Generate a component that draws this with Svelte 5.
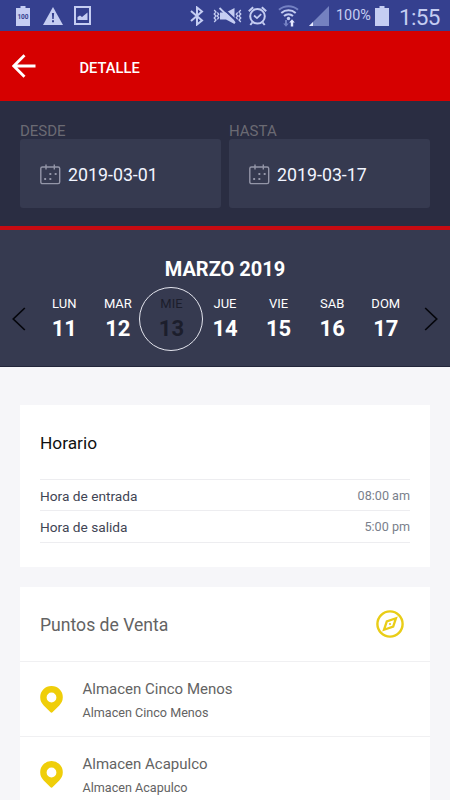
<script lang="ts">
  type Day = { name: string; date: number };
  type Store = { name: string; address: string };

  const filters = [
    { label: 'DESDE', value: '2019-03-01' },
    { label: 'HASTA', value: '2019-03-17' },
  ];

  const days: Day[] = [
    { name: 'LUN', date: 11 },
    { name: 'MAR', date: 12 },
    { name: 'MIE', date: 13 },
    { name: 'JUE', date: 14 },
    { name: 'VIE', date: 15 },
    { name: 'SAB', date: 16 },
    { name: 'DOM', date: 17 },
  ];

  const schedule = [
    { label: 'Hora de entrada', time: '08:00 am' },
    { label: 'Hora de salida', time: '5:00 pm' },
  ];

  const stores: Store[] = [
    { name: 'Almacen Cinco Menos', address: 'Almacen Cinco Menos' },
    { name: 'Almacen Acapulco', address: 'Almacen Acapulco' },
  ];

  let selected = $state(13);
</script>

<div class="screen">
  <div class="status">
    <div class="group left">
      <svg width="14" height="20" viewBox="0 0 14 20">
        <path d="M4.5 0h5v2H14v18H0V2h4.5z" fill="#c5cdf2" />
        <text x="7" y="13.2" text-anchor="middle" class="tiny">100</text>
      </svg>
      <svg class="warn" width="20" height="18" viewBox="0 0 20 18">
        <path d="M10 0l10 18H0z" fill="#c5cdf2" />
        <path d="M8.9 6h2.2l-.4 6H9.3zM9 13.3h2v2H9z" fill="#35408f" />
      </svg>
      <svg class="photo" width="17" height="19" viewBox="0 0 17 19">
        <rect x="1" y="1" width="15" height="17" fill="none" stroke="#c5cdf2" stroke-width="2" />
        <path d="M3.5 14V11l2.5-1.5 2 1.5 5.5-4.5V14z" fill="#c5cdf2" />
      </svg>
    </div>
    <div class="group right">
      <svg width="14" height="20" viewBox="0 0 14 20">
        <path d="M1 5l11 9.5L7 18.5v-17l5 4L1 15" fill="none" stroke="#c5cdf2" stroke-width="2" />
      </svg>
      <svg class="mute" width="29" height="18" viewBox="0 0 29 18">
        <path
          d="M1.2 3l1.8 2-1.8 2L3 9l-1.8 2L3 13l-1.8 2M4.3 5.5l1.4 1.7-1.4 1.7 1.4 1.8-1.4 1.7M27.8 3L26 5l1.8 2L26 9l1.8 2-1.8 2 1.8 2M24.7 5.5l-1.4 1.7 1.4 1.7-1.4 1.8 1.4 1.7"
          fill="none" stroke="#c5cdf2" stroke-width="1.3" />
        <path d="M7 5.5h6L21.5 1v16L13 12.5H7z" fill="#c5cdf2" />
        <path d="M7.5-1L24 14.5" stroke="#35408f" stroke-width="2" />
        <path d="M6.5 1L22 16" stroke="#c5cdf2" stroke-width="1.8" />
      </svg>
      <svg class="alarm" width="19" height="20" viewBox="0 0 19 20">
        <circle cx="9.5" cy="10.3" r="7.3" fill="none" stroke="#c5cdf2" stroke-width="2" />
        <path d="M.8 5.2l4.4-4M18.2 5.2l-4.4-4M4.3 16.5l-2 2.5M14.7 16.5l2 2.5" stroke="#c5cdf2" stroke-width="2" />
        <path d="M6 9.5l3 2.7 4.2-4" fill="none" stroke="#c5cdf2" stroke-width="1.7" />
      </svg>
      <svg class="wifi" width="21" height="22" viewBox="0 0 21 22">
        <path d="M1 4.8a14.5 14.5 0 0 1 19 0" fill="none" stroke="#7481c4" stroke-width="2" />
        <path d="M3.3 8a11 11 0 0 1 14.4 0M6 11a7 7 0 0 1 9 0" fill="none" stroke="#c5cdf2" stroke-width="2" />
        <circle cx="10.5" cy="13.5" r="1.7" fill="#c5cdf2" />
        <path d="M7 15h2v3.5h1.8L8 21.8l-2.8-3.3H7z" fill="#7481c4" />
        <path d="M12.8 21.5v-4h-1.6l2.8-3.3 2.8 3.3h-1.6v4z" fill="#e5e9ff" />
      </svg>
      <svg class="signal" width="20" height="20" viewBox="0 0 20 20">
        <path d="M20 0v20H0z" fill="#7481c0" />
        <path d="M4 16v4H0z" fill="#e5e9ff" />
      </svg>
      <span class="percent">100%</span>
      <svg class="battery" width="14" height="20" viewBox="0 0 14 20">
        <path d="M4.5 0h5v2H14v18H0V2h4.5z" fill="#c5cdf2" />
      </svg>
      <span class="clock">1:55</span>
    </div>
  </div>

  <header>
    <svg width="24" height="24" viewBox="0 0 24 24">
      <path d="M23.5 12H2M12.5 1.2L1.8 12l10.7 10.8" fill="none" stroke="#fff" stroke-width="2.8" />
    </svg>
    <h1>DETALLE</h1>
  </header>

  <section class="filters">
    {#each filters as filter}
      <div class="filter">
        <label for={filter.label}>{filter.label}</label>
        <button id={filter.label} class="date">
          <svg width="21" height="21" viewBox="0 0 21 21">
            <rect x=".8" y="3" width="18.9" height="16.6" rx="1.6" fill="none" stroke="#9496a8" stroke-width="1.4" />
            <path d="M6 .5v5M14.3 .5v5" stroke="#9496a8" stroke-width="1.4" />
            <path
              d="M9.4 9h1.9v1.9H9.4zM14.7 9h1.9v1.9h-1.9zM4.2 14h1.9v1.9H4.2zM9.4 14h1.9v1.9H9.4z"
              fill="#9496a8" />
          </svg>
          <span>{filter.value}</span>
        </button>
      </div>
    {/each}
  </section>

  <section class="calendar">
    <h2>MARZO 2019</h2>
    <div class="week">
      <button class="arrow" aria-label="Anterior">
        <svg width="14" height="24" viewBox="0 0 14 24">
          <path d="M12.8 1L1.3 12l11.5 11" fill="none" stroke="#05060c" stroke-width="1.7" />
        </svg>
      </button>
      {#each days as day}
        <button class="day" class:selected={selected === day.date} onclick={() => (selected = day.date)}>
          <span class="day-name">{day.name}</span>
          <span class="day-date">{day.date}</span>
        </button>
      {/each}
      <button class="arrow" aria-label="Siguiente">
        <svg width="14" height="24" viewBox="0 0 14 24">
          <path d="M1.2 1l11.5 11L1.2 23" fill="none" stroke="#05060c" stroke-width="1.7" />
        </svg>
      </button>
    </div>
  </section>

  <main>
    <div class="card schedule">
      <h3>Horario</h3>
      {#each schedule as row}
        <div class="hour">
          <span>{row.label}</span>
          <span class="time">{row.time}</span>
        </div>
      {/each}
    </div>

    <div class="card stores">
      <div class="stores-head">
        <h3>Puntos de Venta</h3>
        <svg width="28" height="28" viewBox="0 0 28 28">
          <circle cx="14" cy="14" r="12.6" fill="none" stroke="#e9cd17" stroke-width="2.4" />
          <path d="M20 8.2l-2.8 8.5L8 19.8l2.8-8.5z" fill="none" stroke="#e9cd17" stroke-width="2.3" />
          <circle cx="14" cy="14" r="1.1" fill="#e9cd17" />
        </svg>
      </div>
      {#each stores as store}
        <div class="store">
          <svg width="23" height="27" viewBox="0 0 23 27">
            <path
              d="M11.5 0A11.2 11.2 0 0 0 .2 11.3c0 4 1.7 6.2 3.5 8.1l6.6 6.7a1.7 1.7 0 0 0 2.4 0l6.6-6.7c1.8-1.9 3.5-4.1 3.5-8.1A11.2 11.2 0 0 0 11.5 0zm0 6.6a4.9 4.9 0 1 1 0 9.8 4.9 4.9 0 0 1 0-9.8z"
              fill="#efce0a" />
          </svg>
          <div class="store-info">
            <div class="store-name">{store.name}</div>
            <div class="store-address">{store.address}</div>
          </div>
        </div>
      {/each}
    </div>
  </main>
</div>

<style>
  .screen {
    display: flex;
    flex-direction: column;
    width: 450px;
    height: 800px;
    overflow: hidden;
    background: #f6f6f9;
    font-family: Roboto, sans-serif;
  }
  svg {
    display: block;
    flex: none;
  }
  h1,
  h2,
  h3 {
    margin: 0;
  }
  button {
    border: 0;
    padding: 0;
    background: none;
    color: inherit;
    font: inherit;
  }
  .status {
    display: flex;
    flex: none;
    justify-content: space-between;
    height: 31px;
    padding: 0 10px 0 16px;
    box-sizing: border-box;
    background: #35408f;
    color: #c5cdf2;
  }
  .group {
    display: flex;
    align-items: center;
  }
  .tiny {
    fill: #35408f;
    font-size: 6.5px;
    font-weight: 700;
  }
  .warn {
    margin-left: 13px;
  }
  .photo {
    margin-left: 11px;
  }
  .mute {
    margin-left: 9px;
  }
  .alarm {
    margin-left: 6px;
  }
  .wifi {
    margin-left: 11px;
  }
  .signal {
    margin-left: 10px;
  }
  .percent {
    width: 39px;
    margin-left: 7px;
    font-size: 14.4px;
    line-height: 20px;
    padding-top: 1px;
  }
  .clock {
    width: 41px;
    margin-left: 10px;
    font-size: 22.5px;
    letter-spacing: -0.7px;
    line-height: 24px;
    padding-top: 2px;
  }
  header {
    display: flex;
    flex: none;
    align-items: center;
    gap: 43.5px;
    height: 70px;
    padding-left: 12px;
    background: #d60000;
    color: #fff;
  }
  h1 {
    font-size: 14.7px;
    font-weight: 500;
    padding-top: 3px;
  }
  .filters {
    display: flex;
    flex: none;
    gap: 8px;
    height: 129px;
    box-sizing: border-box;
    padding: 20px 20px 0;
    background: #2a2d42;
    border-bottom: 4px solid #c70b12;
  }
  .filter {
    flex: 1;
  }
  label {
    display: block;
    height: 18px;
    font-size: 15px;
    line-height: 20px;
    color: #6b6a73;
  }
  .date {
    display: flex;
    align-items: center;
    gap: 7px;
    width: 100%;
    height: 69px;
    padding: 1px 0 0 20px;
    border-radius: 3px;
    background: #363a50;
    color: #f2f5ff;
    font-size: 17.8px;
  }
  .calendar {
    flex: none;
    height: 137px;
    box-sizing: border-box;
    padding-top: 27px;
    background: #363a50;
    border-bottom: 1px solid #23263a;
    color: #fff;
  }
  h2 {
    font-size: 20px;
    font-weight: 700;
    line-height: 25px;
    text-align: center;
  }
  .week {
    display: flex;
    align-items: center;
    height: 64px;
    margin-top: 4.5px;
  }
  .arrow {
    display: flex;
    justify-content: center;
    width: 37.5px;
  }
  .day {
    position: relative;
    display: flex;
    flex: 1;
    flex-direction: column;
    align-items: center;
  }
  .day-name {
    font-size: 13px;
    line-height: 18px;
  }
  .day-date {
    margin-top: 2px;
    font-size: 22px;
    font-weight: 700;
    line-height: 28px;
  }
  .selected {
    color: #1c1e2c;
  }
  .selected::before {
    content: '';
    position: absolute;
    left: 50%;
    top: 50%;
    width: 62px;
    height: 62px;
    border: 1px solid #e4e5ee;
    border-radius: 50%;
    transform: translate(-50%, -50%);
  }
  main {
    display: flex;
    flex-direction: column;
    gap: 20px;
    padding: 38px 20px 0;
  }
  .card {
    background: #fff;
  }
  .schedule {
    height: 162px;
    box-sizing: border-box;
    padding: 0 20px;
  }
  h3 {
    font-size: 17.3px;
    font-weight: 400;
    color: #111;
  }
  .schedule h3 {
    height: 74px;
    line-height: 76px;
    border-bottom: 1px solid #ededf0;
  }
  .hour {
    display: flex;
    justify-content: space-between;
    height: 30.3px;
    border-bottom: 1px solid #ededf0;
    font-size: 13.7px;
    line-height: 32px;
    color: #3f4554;
  }
  .time {
    font-size: 12.6px;
    color: #7a7f8c;
  }
  .stores-head {
    display: flex;
    align-items: center;
    justify-content: space-between;
    height: 74px;
    padding: 0 26px 0 20px;
    border-bottom: 1px solid #f0f0f2;
  }
  .stores h3 {
    padding-top: 2px;
    font-size: 17.6px;
    color: #636363;
  }
  .store {
    display: flex;
    align-items: center;
    gap: 19.5px;
    height: 74px;
    padding-left: 20px;
    border-bottom: 1px solid #f0f0f2;
    color: #636363;
  }
  .store-info {
    padding-top: 3px;
  }
  .store-name {
    font-size: 15px;
    line-height: 22px;
  }
  .store-address {
    margin-top: 2px;
    font-size: 12.6px;
    line-height: 21px;
  }
</style>
